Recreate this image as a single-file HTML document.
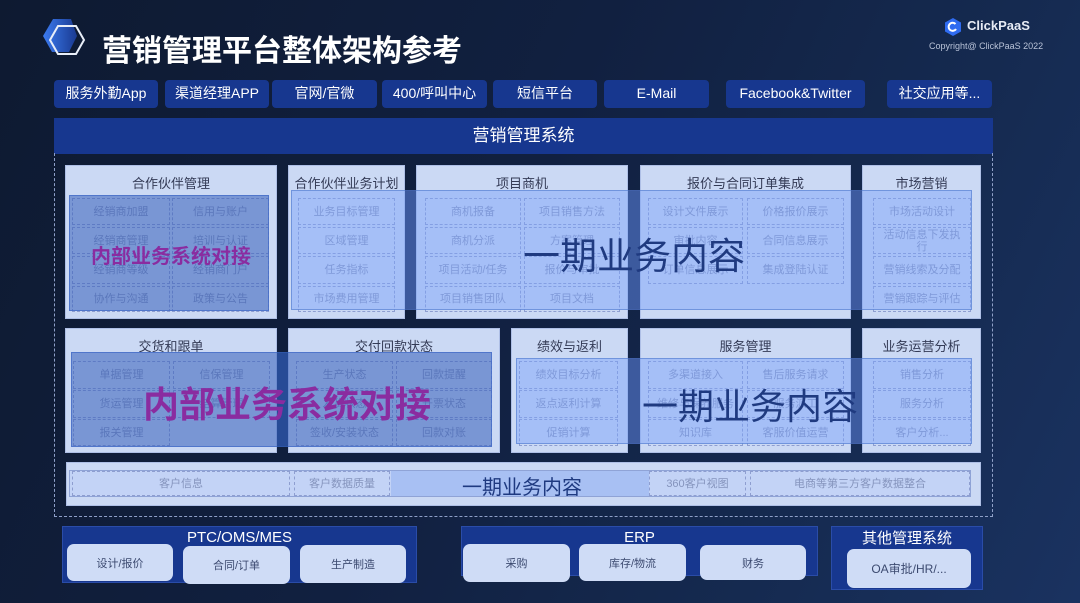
<!DOCTYPE html>
<html><head><meta charset="utf-8">
<style>
*{margin:0;padding:0;box-sizing:border-box}
body{width:1080px;height:603px;overflow:hidden;position:relative;background:linear-gradient(115deg,#0e1a31 0%,#112040 45%,#152a50 75%,#1a3260 100%);font-family:"Liberation Sans","Noto Sans CJK SC",sans-serif}
.a{position:absolute}
.btn{position:absolute;top:80px;height:28px;background:#17378f;border-radius:4px;color:#fff;font-size:14px;line-height:27px;text-align:center}
.card{position:absolute;background:#cbd9f4;border:1px solid #aebfe6}
.ct{position:absolute;left:0;right:0;text-align:center;color:#333a55;font-size:13px}
.c{position:absolute;border:1px dashed #8e9ed0;color:#8594bd;font-size:11px;text-align:center;display:flex;align-items:center;justify-content:center;line-height:12px}
.ov1{position:absolute;background:rgba(55,95,185,0.55);border:1px solid rgba(70,110,200,0.8)}
.ov2{position:absolute;background:rgba(120,160,250,0.45);border:1px solid rgba(90,130,210,0.7)}
.pt{position:absolute;color:#8a2ca0;font-weight:bold;white-space:nowrap}
.bt{position:absolute;color:#1f3a80;white-space:nowrap}
.sb{position:absolute;background:#cfdcf6;border-radius:7px;color:#3c4a70;font-size:11px;display:flex;align-items:center;justify-content:center}
.big{position:absolute;background:#17378f;border:1px solid #2a4ca8;color:#fff;font-size:15px;text-align:center}
</style></head><body>
<!-- header -->
<svg class="a" style="left:40px;top:16px" width="46" height="44" viewBox="0 0 46 44">
<defs><linearGradient id="g" x1="0" x2="1"><stop offset="0" stop-color="#3b7bf0"/><stop offset="1" stop-color="#1a3a90"/></linearGradient></defs>
<polygon points="3,20 13,3 31,3 37,20 29,36 12,36" fill="url(#g)"/>
<polygon points="10,24 18,10 36,10 44,24 36,38 18,38" fill="none" stroke="#e8eef8" stroke-width="2"/>
</svg>
<div class="a" style="left:102px;top:26px;color:#fff;font-size:30px;font-weight:bold;letter-spacing:0px">营销管理平台整体架构参考</div>
<svg class="a" style="left:944px;top:17px" width="18" height="20" viewBox="0 0 18 20"><polygon points="9,1 17,5.5 17,14.5 9,19 1,14.5 1,5.5" fill="#2f6bf0"/><path d="M11.5 7 A4 4 0 1 0 12 12" stroke="#fff" stroke-width="2" fill="none"/></svg>
<div class="a" style="left:967px;top:18px;color:#e6ebf5;font-size:13px;font-weight:bold">ClickPaaS</div>
<div class="a" style="left:929px;top:41px;color:#b9c3d8;font-size:9px">Copyright@ ClickPaaS 2022</div>
<!-- top buttons -->
<div class="btn" style="left:54px;width:104px">服务外勤App</div>
<div class="btn" style="left:165px;width:104px">渠道经理APP</div>
<div class="btn" style="left:272px;width:105px">官网/官微</div>
<div class="btn" style="left:382px;width:105px">400/呼叫中心</div>
<div class="btn" style="left:493px;width:104px">短信平台</div>
<div class="btn" style="left:604px;width:105px">E-Mail</div>
<div class="btn" style="left:726px;width:139px">Facebook&amp;Twitter</div>
<div class="btn" style="left:887px;width:105px">社交应用等...</div>
<!-- system -->
<div class="a" style="left:54px;top:118px;width:939px;height:36px;background:#17378f;color:#fff;font-size:17px;text-align:center;line-height:35px">营销管理系统</div>
<div class="a" style="left:54px;top:153px;width:939px;height:364px;border:1px dashed #8fa0c8;border-top:none"></div>

<!-- row1 cards -->
<div class="card" style="left:65px;top:165px;width:212px;height:154px"><div class="ct" style="top:7px">合作伙伴管理</div></div>
<div class="card" style="left:288px;top:165px;width:117px;height:154px"><div class="ct" style="top:7px">合作伙伴业务计划</div></div>
<div class="card" style="left:416px;top:165px;width:212px;height:154px"><div class="ct" style="top:7px">项目商机</div></div>
<div class="card" style="left:640px;top:165px;width:211px;height:154px"><div class="ct" style="top:7px">报价与合同订单集成</div></div>
<div class="card" style="left:862px;top:165px;width:119px;height:154px"><div class="ct" style="top:7px">市场营销</div></div>

<!-- row1 cells -->
<div class="c" style="left:72px;top:198px;width:98px;height:27px">经销商加盟</div>
<div class="c" style="left:172px;top:198px;width:97px;height:27px">信用与账户</div>
<div class="c" style="left:72px;top:227px;width:98px;height:27px">经销商管理</div>
<div class="c" style="left:172px;top:227px;width:97px;height:27px">培训与认证</div>
<div class="c" style="left:72px;top:256px;width:98px;height:28px">经销商等级</div>
<div class="c" style="left:172px;top:256px;width:97px;height:28px">经销商门户</div>
<div class="c" style="left:72px;top:286px;width:98px;height:26px">协作与沟通</div>
<div class="c" style="left:172px;top:286px;width:97px;height:26px">政策与公告</div>

<div class="c" style="left:298px;top:198px;width:97px;height:27px">业务目标管理</div>
<div class="c" style="left:298px;top:227px;width:97px;height:27px">区域管理</div>
<div class="c" style="left:298px;top:256px;width:97px;height:28px">任务指标</div>
<div class="c" style="left:298px;top:286px;width:97px;height:26px">市场费用管理</div>

<div class="c" style="left:425px;top:198px;width:96px;height:27px">商机报备</div>
<div class="c" style="left:524px;top:198px;width:96px;height:27px">项目销售方法</div>
<div class="c" style="left:425px;top:227px;width:96px;height:27px">商机分派</div>
<div class="c" style="left:524px;top:227px;width:96px;height:27px">方案管理</div>
<div class="c" style="left:425px;top:256px;width:96px;height:28px">项目活动/任务</div>
<div class="c" style="left:524px;top:256px;width:96px;height:28px">报价与审批</div>
<div class="c" style="left:425px;top:286px;width:96px;height:26px">项目销售团队</div>
<div class="c" style="left:524px;top:286px;width:96px;height:26px">项目文档</div>

<div class="c" style="left:648px;top:198px;width:95px;height:27px">设计文件展示</div>
<div class="c" style="left:747px;top:198px;width:97px;height:27px">价格报价展示</div>
<div class="c" style="left:648px;top:227px;width:95px;height:27px">审批内容</div>
<div class="c" style="left:747px;top:227px;width:97px;height:27px">合同信息展示</div>
<div class="c" style="left:648px;top:256px;width:95px;height:28px">订单信息展示</div>
<div class="c" style="left:747px;top:256px;width:97px;height:28px">集成登陆认证</div>

<div class="c" style="left:873px;top:198px;width:98px;height:27px">市场活动设计</div>
<div class="c" style="left:873px;top:227px;width:98px;height:27px">活动信息下发执<br>行</div>
<div class="c" style="left:873px;top:256px;width:98px;height:28px">营销线索及分配</div>
<div class="c" style="left:873px;top:286px;width:98px;height:26px">营销跟踪与评估</div>

<div class="ov1" style="left:69px;top:195px;width:200px;height:116px"></div>
<div class="pt" style="left:91px;top:240px;font-size:20px">内部业务系统对接</div>
<div class="ov2" style="left:291px;top:190px;width:681px;height:120px"></div>
<div class="a" style="left:405px;top:190px;width:11px;height:120px;background:rgba(60,90,160,0.75)"></div>
<div class="a" style="left:628px;top:190px;width:12px;height:120px;background:rgba(60,90,160,0.75)"></div>
<div class="a" style="left:851px;top:190px;width:11px;height:120px;background:rgba(60,90,160,0.75)"></div>
<div class="bt" style="left:523px;top:226px;font-size:37px">一期业务内容</div>

<!-- row2 cards -->
<div class="card" style="left:65px;top:328px;width:212px;height:125px"><div class="ct" style="top:7px">交货和跟单</div></div>
<div class="card" style="left:288px;top:328px;width:212px;height:125px"><div class="ct" style="top:7px">交付回款状态</div></div>
<div class="card" style="left:511px;top:328px;width:117px;height:125px"><div class="ct" style="top:7px">绩效与返利</div></div>
<div class="card" style="left:640px;top:328px;width:211px;height:125px"><div class="ct" style="top:7px">服务管理</div></div>
<div class="card" style="left:862px;top:328px;width:119px;height:125px"><div class="ct" style="top:7px">业务运营分析</div></div>

<div class="c" style="left:73px;top:361px;width:97px;height:28px">单据管理</div>
<div class="c" style="left:173px;top:361px;width:97px;height:28px">信保管理</div>
<div class="c" style="left:73px;top:390px;width:97px;height:28px">货运管理</div>
<div class="c" style="left:173px;top:390px;width:97px;height:28px">结算管理</div>
<div class="c" style="left:73px;top:419px;width:97px;height:27px">报关管理</div>

<div class="c" style="left:296px;top:361px;width:97px;height:28px">生产状态</div>
<div class="c" style="left:396px;top:361px;width:96px;height:28px">回款提醒</div>
<div class="c" style="left:296px;top:390px;width:97px;height:28px">发货状态</div>
<div class="c" style="left:396px;top:390px;width:96px;height:28px">开票状态</div>
<div class="c" style="left:296px;top:419px;width:97px;height:27px">签收/安装状态</div>
<div class="c" style="left:396px;top:419px;width:96px;height:27px">回款对账</div>

<div class="c" style="left:519px;top:361px;width:99px;height:28px">绩效目标分析</div>
<div class="c" style="left:519px;top:390px;width:99px;height:28px">返点返利计算</div>
<div class="c" style="left:519px;top:419px;width:99px;height:27px">促销计算</div>

<div class="c" style="left:648px;top:361px;width:95px;height:28px">多渠道接入</div>
<div class="c" style="left:747px;top:361px;width:97px;height:28px">售后服务请求</div>
<div class="c" style="left:648px;top:390px;width:95px;height:28px">维修与保养服务</div>
<div class="c" style="left:747px;top:390px;width:97px;height:28px">服务派工</div>
<div class="c" style="left:648px;top:419px;width:95px;height:27px">知识库</div>
<div class="c" style="left:747px;top:419px;width:97px;height:27px">客服价值运营</div>

<div class="c" style="left:873px;top:361px;width:98px;height:28px">销售分析</div>
<div class="c" style="left:873px;top:390px;width:98px;height:28px">服务分析</div>
<div class="c" style="left:873px;top:419px;width:98px;height:27px">客户分析...</div>

<div class="ov1" style="left:71px;top:352px;width:421px;height:95px"></div>
<div class="a" style="left:277px;top:352px;width:11px;height:95px;background:rgba(40,80,160,0.7)"></div>
<div class="pt" style="left:143px;top:376px;font-size:36px">内部业务系统对接</div>
<div class="ov2" style="left:516px;top:358px;width:456px;height:86px"></div>
<div class="a" style="left:628px;top:358px;width:12px;height:86px;background:rgba(60,90,160,0.75)"></div>
<div class="a" style="left:851px;top:358px;width:11px;height:86px;background:rgba(60,90,160,0.75)"></div>
<div class="bt" style="left:642px;top:378px;font-size:36px">一期业务内容</div>

<!-- row3 -->
<div class="card" style="left:66px;top:462px;width:915px;height:44px"></div>
<div class="a" style="left:69px;top:470px;width:902px;height:27px;border:1px solid #8fa3d6;background:#c3d3f6"></div>
<div class="c" style="left:72px;top:471px;width:218px;height:25px">客户信息</div>
<div class="c" style="left:294px;top:471px;width:96px;height:25px">客户数据质量</div>
<div class="a" style="left:391px;top:471px;width:258px;height:25px;background:#a8c0f3"></div>
<div class="bt" style="left:462px;top:471px;font-size:20px">一期业务内容</div>
<div class="c" style="left:649px;top:471px;width:97px;height:25px">360客户视图</div>
<div class="c" style="left:750px;top:471px;width:220px;height:25px">电商等第三方客户数据整合</div>

<!-- bottom -->
<div class="big" style="left:62px;top:526px;width:355px;height:57px;line-height:22px">PTC/OMS/MES</div>
<div class="sb" style="left:67px;top:544px;width:106px;height:37px">设计/报价</div>
<div class="sb" style="left:183px;top:546px;width:107px;height:38px">合同/订单</div>
<div class="sb" style="left:300px;top:545px;width:106px;height:38px">生产制造</div>
<div class="big" style="left:461px;top:526px;width:357px;height:50px;line-height:22px">ERP</div>
<div class="sb" style="left:463px;top:544px;width:107px;height:38px">采购</div>
<div class="sb" style="left:579px;top:544px;width:107px;height:37px">库存/物流</div>
<div class="sb" style="left:700px;top:545px;width:106px;height:35px">财务</div>
<div class="big" style="left:831px;top:526px;width:152px;height:64px;line-height:24px">其他管理系统</div>
<div class="sb" style="left:847px;top:549px;width:124px;height:39px;font-size:12px">OA审批/HR/...</div>
</body></html>
